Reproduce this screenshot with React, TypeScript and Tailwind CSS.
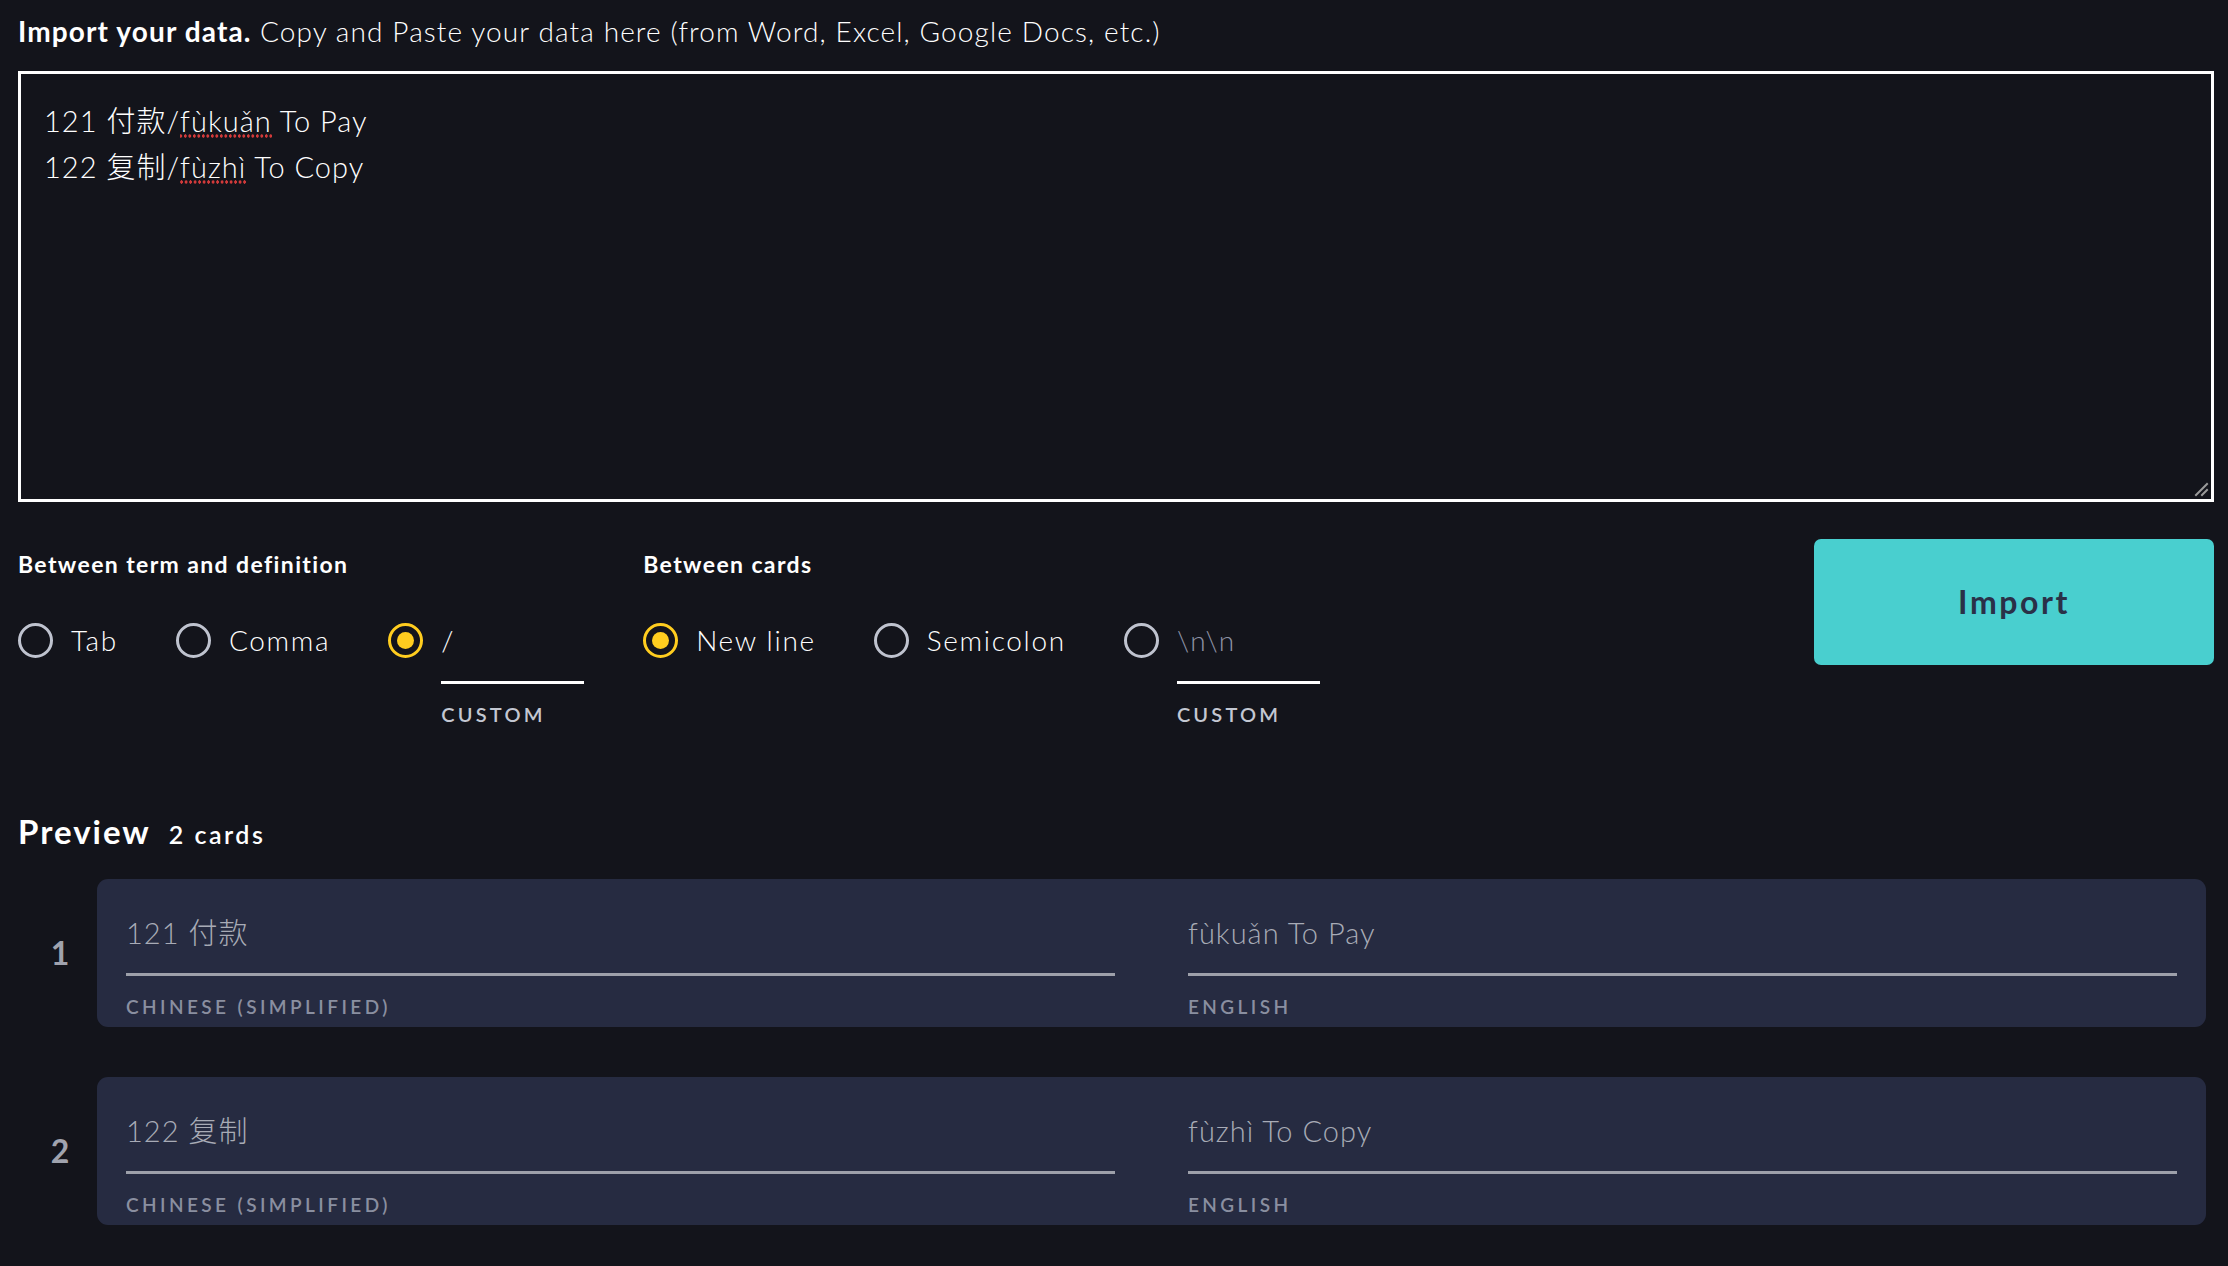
const font = "font-['Lato','Noto_Sans_CJK_SC',sans-serif]";

const cards = [
  { n: 1, term: "121 付款", def: "fùkuǎn To Pay" },
  { n: 2, term: "122 复制", def: "fùzhì To Copy" },
];

// spell-check squiggle look
const misspelt =
  "bg-[radial-gradient(circle,#d23a3a_1.5px,transparent_1.8px)] bg-[length:4.5px_4px] bg-repeat-x bg-bottom";

function Radio({ checked }: { checked?: boolean }) {
  return (
    <span
      className={
        checked
          ? "flex h-[35px] w-[35px] shrink-0 items-center justify-center rounded-full border-[3px] border-[#ffcd1f]"
          : "flex h-[35px] w-[35px] shrink-0 items-center justify-center rounded-full border-[3px] border-[#bfc3cf]"
      }
    >
      {checked && <span className="h-[17px] w-[17px] rounded-full bg-[#ffcd1f]" />}
    </span>
  );
}

function Option({ label, checked }: { label: string; checked?: boolean }) {
  return (
    <label className="flex h-[40px] items-center gap-[18px]">
      <Radio checked={checked} />
      <span className="text-[28px] font-light leading-[40px] tracking-[0.06em] text-white">{label}</span>
    </label>
  );
}

function Custom({ value, placeholder, checked }: { value?: string; placeholder?: string; checked?: boolean }) {
  return (
    <div className="flex items-start gap-[18px]">
      <div className="flex h-[40px] items-center">
        <Radio checked={checked} />
      </div>
      <div className="flex w-[143px] flex-col">
        <div className="h-[64px] border-b-[3px] border-white">
          {value ? (
            <span className="text-[28px] font-light leading-[40px] text-white">{value}</span>
          ) : (
            <span className="text-[28px] font-light leading-[40px] tracking-[0.04em] text-[#8e93a6]">{placeholder}</span>
          )}
        </div>
        <span className="mt-[18px] text-[20px] font-semibold leading-[24px] tracking-[0.16em] text-[#c3c7d2]">
          CUSTOM
        </span>
      </div>
    </div>
  );
}

export default function App() {
  return (
    <div className={`min-h-[1266px] w-full bg-[#13141b] pt-[11px] ${font}`}>
      <div className="pl-[18px] pr-[14px]">
        {/* header */}
        <p className="text-[28px] leading-[40px] tracking-[0.04em] text-white">
          <span className="font-bold">Import your data.</span>{" "}
          <span className="font-light">Copy and Paste your data here (from Word, Excel, Google Docs, etc.)</span>
        </p>

        {/* textarea */}
        <div className="relative mt-[20px] h-[431px] border-[3px] border-white px-[23px] pt-[24px] text-[29px] font-light leading-[46px] tracking-[0.035em] text-white">
          <div>
            121 付款/<span className={misspelt}>fùkuǎn</span> To Pay
          </div>
          <div>
            122 复制/<span className={misspelt}>fùzhì</span> To Copy
          </div>
          <svg className="absolute bottom-[2px] right-[2px]" width="16" height="16" viewBox="0 0 16 16">
            <path d="M3 14L14 3M9 14L14 9" stroke="#9a9a9a" strokeWidth="2" strokeLinecap="square" />
          </svg>
        </div>

        {/* options */}
        <div className="mt-[37px] flex items-start">
          <div className="flex gap-[59px] pt-[9px]">
            <div className="flex flex-col">
              <span className="text-[23px] font-bold leading-[32px] tracking-[0.06em] text-white">
                Between term and definition
              </span>
              <div className="mt-[40px] flex items-start gap-[58px]">
                <Option label="Tab" />
                <Option label="Comma" />
                <Custom value="/" checked />
              </div>
            </div>
            <div className="flex flex-col">
              <span className="text-[23px] font-bold leading-[32px] tracking-[0.06em] text-white">Between cards</span>
              <div className="mt-[40px] flex items-start gap-[58px]">
                <Option label="New line" checked />
                <Option label="Semicolon" />
                <Custom placeholder="\n\n" />
              </div>
            </div>
          </div>
          <button className="ml-auto flex h-[126px] w-[400px] items-center justify-center rounded-[7px] bg-[#49cfcf] text-[32px] font-bold tracking-[0.08em] text-[#2a3148]">
            Import
          </button>
        </div>

        {/* preview */}
        <div className="mt-[83px] flex h-[44px] items-baseline gap-[18px]">
          <h2 className="text-[33px] font-bold leading-[44px] tracking-[0.06em] text-white">Preview</h2>
          <span className="text-[25px] font-semibold leading-[44px] tracking-[0.1em] text-white">2 cards</span>
        </div>
      </div>

      <div className="mt-[26px] flex flex-col gap-[50px] pl-[18px] pr-[22px]">
        {cards.map((c) => (
          <div key={c.n} className="flex items-center">
            <div className="w-[79px] pl-[5px] text-center text-[32px] font-bold text-[#a0a3ae]">{c.n}</div>
            <div className="grid flex-1 grid-cols-2 gap-[73px] rounded-[11px] bg-[#262b41] px-[29px] pb-[8px] pt-[34px]">
              {[
                { text: c.term, lang: "CHINESE (SIMPLIFIED)" },
                { text: c.def, lang: "ENGLISH" },
              ].map((f) => (
                <div key={f.lang} className="flex flex-col">
                  <span className="text-[29px] font-light leading-[40px] tracking-[0.035em] text-[#a8abb6]">
                    {f.text}
                  </span>
                  <div className="mt-[20px] h-[3px] bg-[#9da0aa]" />
                  <span className="mt-[19px] text-[19px] font-semibold leading-[24px] tracking-[0.18em] text-[#8a8fa0]">
                    {f.lang}
                  </span>
                </div>
              ))}
            </div>
          </div>
        ))}
      </div>
    </div>
  );
}
